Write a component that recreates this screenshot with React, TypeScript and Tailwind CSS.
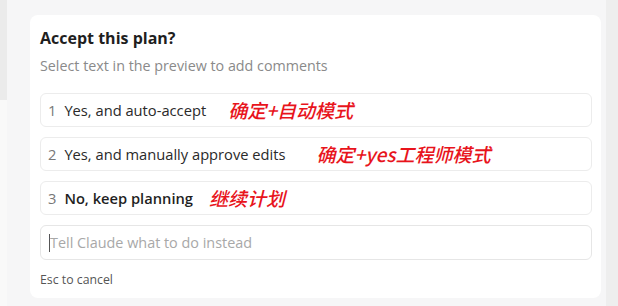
export default function App() {
  const font = { fontFamily: '"Open Sans", "Noto Sans", sans-serif' };
  const cjk = { fontFamily: '"Noto Sans CJK SC", sans-serif' };
  return (
    <div className="w-[618px] h-[306px] bg-[#f6f6f7] flex overflow-hidden" style={font}>
      <div className="w-[7px] flex flex-col">
        <div className="h-[100px] bg-[#ebebeb]" />
        <div className="flex-1 bg-[#f9f9f9]" />
      </div>
      <div className="flex-1 pl-[23px] pt-[15px] pr-[5px]">
        <div className="w-[571px] h-[283px] bg-white rounded-lg pl-[10px] pr-[9px] flex flex-col">
          <div className="pt-[13px] text-[16px] font-bold text-[#1f1f1f] leading-[20px]">Accept this plan?</div>
          <div className="mt-[8px] text-[14.3px] text-[#8a8a8a] leading-[20px]">Select text in the preview to add comments</div>
          <div className="mt-[17px] flex flex-col gap-[10px]">
            <div className="h-[34px] border border-[#ececec] rounded-md flex items-center pl-[7px]">
              <span className="text-[14.7px] text-[#777]">1</span>
              <span className="ml-[8px] text-[14.7px] font-medium text-[#2a2a2a]">Yes, and auto-accept</span>
              <span className="ml-[22px] text-[19px] italic text-[#e8141c] font-medium" style={cjk}>确定+自动模式</span>
            </div>
            <div className="h-[34px] border border-[#ececec] rounded-md flex items-center pl-[7px]">
              <span className="text-[14.7px] text-[#777]">2</span>
              <span className="ml-[8px] text-[14.7px] font-medium text-[#2a2a2a]">Yes, and manually approve edits</span>
              <span className="ml-[31px] text-[19px] italic text-[#e8141c] font-medium" style={cjk}>确定+yes工程师模式</span>
            </div>
            <div className="h-[34px] border border-[#ececec] rounded-md flex items-center pl-[7px]">
              <span className="text-[14.7px] text-[#777]">3</span>
              <span className="ml-[8px] text-[14.7px] font-semibold text-[#1f1f1f]">No, keep planning</span>
              <span className="ml-[16px] text-[19px] italic text-[#e8141c] font-medium" style={cjk}>继续计划</span>
            </div>
            <div className="h-[35px] border border-[#e6e6e6] rounded-md flex items-center pl-[8px]">
              <span className="w-px h-[18px] bg-[#555]" />
              <span className="text-[14.4px] text-[#a8a8a8]">Tell Claude what to do instead</span>
            </div>
          </div>
          <div className="mt-[12px] text-[12.3px] text-[#555] leading-[16px]">Esc to cancel</div>
        </div>
      </div>
      <div className="w-[12px] bg-[#eeeeee]" />
    </div>
  );
}
